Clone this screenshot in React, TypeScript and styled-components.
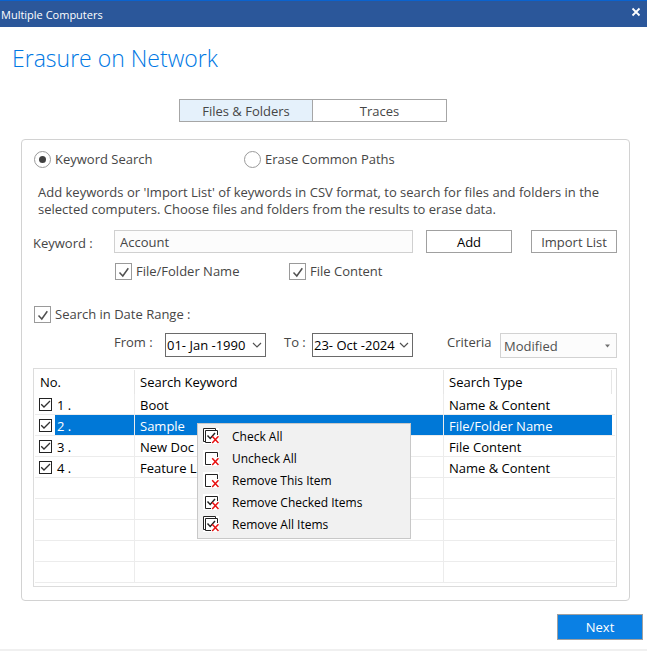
import React, { useState } from "react";
import styled, { createGlobalStyle, css } from "styled-components";

const GlobalStyle = createGlobalStyle`
  *, *::before, *::after { box-sizing: border-box; }
  body { margin: 0; background: #ffffff; }
  body, button, input, select { font-family: "Open Sans", "Noto Sans", sans-serif; font-size: 13px; }
`;

const Window = styled.div`
  display: flex;
  flex-direction: column;
  min-height: 100vh;
  color: #464646;
  line-height: 17px;
  border-bottom: 2px solid #f0f0f0;
`;

const TitleBar = styled.header`
  display: flex;
  align-items: flex-start;
  justify-content: space-between;
  height: 27px;
  padding: 0 5px 0 1px;
  background: #2b579a;
  border-top: 1px solid #0a63cf;
  color: #ffffff;
`;

const WindowTitle = styled.span`
  padding-top: 5px;
  font-size: 11px;
`;

const CloseButton = styled.button`
  display: grid;
  place-items: center;
  width: 12px;
  height: 22px;
  padding: 0;
  border: 0;
  background: none;
  color: #ffffff;
`;

const Heading = styled.h1`
  margin: 14px 0 0 12px;
  font-size: 23px;
  font-weight: 300;
  line-height: 34px;
  color: #0078e4;
`;

const Tabs = styled.div`
  display: flex;
  align-self: center;
  margin: 24px 21px 0 0;
`;

const Tab = styled.button<{ $active?: boolean }>`
  width: 134px;
  height: 23px;
  padding: 1px 0 0;
  border: 1px solid #a6a6a6;
  background: ${(p) => (p.$active ? "#e5f1fb" : "#ffffff")};
  color: #464646;
  line-height: 20px;

  & + & {
    width: 135px;
    margin-left: -1px;
  }
`;

const Panel = styled.main`
  display: flex;
  flex-direction: column;
  margin: 17px 17px 0 21px;
  padding: 10px 12px 13px 11px;
  border: 1px solid #d2d2d2;
  border-radius: 4px;
`;

const RadioRow = styled.div`
  display: grid;
  grid-template-columns: 210px auto;
  justify-content: start;
  padding-left: 1px;
`;

const Choice = styled.label`
  display: inline-flex;
  align-items: center;
  gap: 4px;
  height: 18px;
`;

const RadioInput = styled.input`
  appearance: none;
  display: grid;
  place-items: center;
  width: 17px;
  height: 17px;
  margin: 0;
  border: 1px solid #9a9a9a;
  border-radius: 50%;
  background: #ffffff;

  &:checked::before {
    content: "";
    width: 7px;
    height: 7px;
    border-radius: 50%;
    background: #404040;
  }
`;

const TickWrap = styled.span`
  display: grid;
  place-items: center;

  & > * {
    grid-area: 1 / 1;
  }

  svg {
    pointer-events: none;
    visibility: hidden;
  }

  input:checked + svg {
    visibility: visible;
  }
`;

const TickInput = styled.input<{ $small?: boolean }>`
  appearance: none;
  width: ${(p) => (p.$small ? 13 : 17)}px;
  height: ${(p) => (p.$small ? 13 : 17)}px;
  margin: 0;
  border: 1px solid ${(p) => (p.$small ? "#222222" : "#9a9a9a")};
  background: #ffffff;
`;

const Description = styled.p`
  margin: 16px 0 0 5px;
  line-height: 17px;
`;

const KeywordRow = styled.div`
  display: flex;
  align-items: center;
  margin-top: 12px;
`;

const KeywordLabel = styled.label`
  width: 81px;
  padding-top: 4px;
`;

const KeywordInput = styled.input`
  flex: 1;
  min-width: 0;
  height: 23px;
  padding: 0 5px;
  border: 1px solid #d0d0d0;
  border-radius: 0;
  background: #fcfcfc;
  color: #464646;
`;

const OutlineButton = styled.button<{ $dark?: boolean; $gap: number }>`
  width: 86px;
  height: 23px;
  margin-left: ${(p) => p.$gap}px;
  padding: 0;
  border: 1px solid #a0a0a0;
  background: #ffffff;
  color: ${(p) => (p.$dark ? "#000000" : "#464646")};
`;

const ScopeRow = styled.div`
  display: grid;
  grid-template-columns: 174px auto;
  justify-content: start;
  margin-top: 9px;
  padding-left: 82px;
`;

const RangeRow = styled.div`
  display: flex;
  margin-top: 25px;
  padding-left: 1px;
`;

const DateRow = styled.div`
  display: flex;
  align-items: flex-start;
  margin-top: 10px;
  padding-left: 81px;
`;

const FieldLabel = styled.label<{ $width: number }>`
  width: ${(p) => p.$width}px;
  padding-top: 1px;
`;

const SelectWrap = styled.span<{ $width: number }>`
  display: grid;
  align-items: center;
  width: ${(p) => p.$width}px;

  & > * {
    grid-area: 1 / 1;
  }

  svg {
    justify-self: end;
    margin-right: 4px;
    pointer-events: none;
  }
`;

const Select = styled.select<{ $muted?: boolean }>`
  appearance: none;
  width: 100%;
  height: ${(p) => (p.$muted ? 25 : 24)}px;
  padding: 0 1px;
  border: 1px solid #6a6a6a;
  border-radius: 0;
  background: #ffffff;
  color: #000000;

  ${(p) =>
    p.$muted &&
    css`
      padding: 0 3px;
      border-color: #d2d2d2;
      background: #fcfcfc;
      color: #505050;
    `}
`;

const CriteriaGroup = styled.div`
  display: flex;
  margin-left: auto;
`;

const List = styled.div`
  position: relative;
  height: 219px;
  margin-top: 10px;
  padding: 1px;
  border: 1px solid #dcdcdc;
`;

const Table = styled.table`
  width: 100%;
  table-layout: fixed;
  border-collapse: separate;
  border-spacing: 0;
  color: #000000;
`;

const Col = styled.col<{ $width?: string }>`
  width: ${(p) => p.$width ?? "auto"};
`;

const HeadCell = styled.th`
  height: 24px;
  padding: 0 5px;
  border-right: 1px solid #e6e6e6;
  font-weight: 400;
  text-align: left;

  &:last-child {
    padding: 0;
    border-right: 0;
  }
`;

const Cell = styled.td<{ $selected?: boolean }>`
  height: 21px;
  padding: 2px 5px 0;
  border-right: 1px solid #ececec;
  border-bottom: 1px solid #ececec;
  overflow: hidden;
  white-space: nowrap;
  background: ${(p) => (p.$selected ? "#0078d7" : "transparent")};
  background-clip: padding-box;
  color: ${(p) => (p.$selected ? "#ffffff" : "#000000")};

  &:nth-child(3) {
    border-right: 0;
  }

  &:last-child {
    padding: 0;
    border-right: 0;
  }
`;

const NumberCell = styled(Cell)`
  padding: 0;
  background: transparent;
`;

const NumberLabel = styled.label`
  display: flex;
  align-items: center;
  padding-left: 4px;
  gap: 3px;
`;

const NumberText = styled.span<{ $selected?: boolean }>`
  flex: 1;
  height: 20px;
  padding: 2px 0 0 2px;
  line-height: 18px;
  background: ${(p) => (p.$selected ? "#0078d7" : "transparent")};
  color: ${(p) => (p.$selected ? "#ffffff" : "#000000")};
`;

const Menu = styled.ul`
  position: absolute;
  top: 54px;
  left: 163px;
  width: 214px;
  margin: 0;
  padding: 1px 1px 3px;
  list-style: none;
  border: 1px solid #c8c8c8;
  background: #f1f1f1;
`;

const MenuButton = styled.button`
  display: flex;
  align-items: center;
  gap: 13px;
  width: 100%;
  height: 22px;
  padding: 0 4px;
  border: 0;
  background: none;
  color: #000000;
  font-size: 12px;
`;

const Footer = styled.footer`
  display: flex;
  justify-content: flex-end;
  padding: 13px 4px 8px;
`;

const NextButton = styled.button`
  width: 86px;
  height: 26px;
  padding: 0;
  border: 1px solid #a0a0a0;
  background: #0a80e4;
  color: #ffffff;
`;

const ChevronIcon = () => (
  <svg width="10" height="6" viewBox="0 0 10 6" fill="none" stroke="#505050" strokeWidth="1.2">
    <path d="M1 1 L5 5 L9 1" />
  </svg>
);

const ArrowIcon = () => (
  <svg width="9" height="4" viewBox="0 0 9 4" fill="#707070">
    <path d="M1 0.5 H6 L3.5 3.5 Z" />
  </svg>
);

function Tick({ small }: { small?: boolean }) {
  const [on, setOn] = useState(true);
  return (
    <TickWrap>
      <TickInput type="checkbox" $small={small} checked={on} onChange={() => setOn(!on)} />
      {small ? (
        <svg width="13" height="13" viewBox="0 0 13 13" fill="none" stroke="#303030" strokeWidth="1.3">
          <path d="M2.2 6.2 L5 9 L11 3" />
        </svg>
      ) : (
        <svg width="17" height="17" viewBox="0 0 17 17" fill="none" stroke="#505050" strokeWidth="1.5">
          <path d="M4.5 9.5 L7.8 13 L13.3 5.2" />
        </svg>
      )}
    </TickWrap>
  );
}

function MenuIcon({ stacked, ticked }: { stacked?: boolean; ticked?: boolean }) {
  return (
    <svg width="16" height="16" viewBox="0 0 16 16" fill="none">
      <rect width="16" height="16" fill="#ffffff" />
      {stacked && <path d="M2.5 13.5 H0.5 V0.5 H12.5 V2.5" stroke="#222222" />}
      <path d="M14.5 7 V2.5 H2.5 V14.5 H8" stroke="#222222" />
      {ticked && <path d="M4.5 7.5 L7.2 10.5 L12 5" stroke="#222222" strokeWidth="1.4" />}
      <path d="M9.2 8.2 L15.5 15 M15.5 8.2 L9.2 15" stroke="#e81010" strokeWidth="1.5" />
    </svg>
  );
}

const items = [
  { keyword: "Boot", type: "Name & Content" },
  { keyword: "Sample", type: "File/Folder Name" },
  { keyword: "New Doc", type: "File Content" },
  { keyword: "Feature List", type: "Name & Content" },
];

const menuItems = [
  { text: "Check All", stacked: true, ticked: true },
  { text: "Uncheck All" },
  { text: "Remove This Item" },
  { text: "Remove Checked Items", ticked: true },
  { text: "Remove All Items", stacked: true, ticked: true },
];

export default function App() {
  const [mode, setMode] = useState("keyword");
  return (
    <>
      <GlobalStyle />
      <Window>
        <TitleBar>
          <WindowTitle>Multiple Computers</WindowTitle>
          <CloseButton aria-label="Close">
            <svg width="10" height="10" viewBox="0 0 10 10" stroke="currentColor" strokeWidth="1.8">
              <path d="M1.5 1.5 L8.5 8.5 M8.5 1.5 L1.5 8.5" />
            </svg>
          </CloseButton>
        </TitleBar>
        <Heading>Erasure on Network</Heading>
        <Tabs role="tablist">
          <Tab role="tab" aria-selected="true" $active>Files &amp; Folders</Tab>
          <Tab role="tab" aria-selected="false">Traces</Tab>
        </Tabs>
        <Panel>
          <RadioRow>
            <Choice>
              <RadioInput type="radio" name="mode" checked={mode === "keyword"} onChange={() => setMode("keyword")} />
              Keyword Search
            </Choice>
            <Choice>
              <RadioInput type="radio" name="mode" checked={mode === "paths"} onChange={() => setMode("paths")} />
              Erase Common Paths
            </Choice>
          </RadioRow>
          <Description>
            Add keywords or 'Import List' of keywords in CSV format, to search for files and folders in the selected
            computers. Choose files and folders from the results to erase data.
          </Description>
          <KeywordRow>
            <KeywordLabel htmlFor="keyword">Keyword :</KeywordLabel>
            <KeywordInput id="keyword" defaultValue="Account" />
            <OutlineButton $dark $gap={13}>Add</OutlineButton>
            <OutlineButton $gap={19}>Import List</OutlineButton>
          </KeywordRow>
          <ScopeRow>
            <Choice><Tick />File/Folder Name</Choice>
            <Choice><Tick />File Content</Choice>
          </ScopeRow>
          <RangeRow>
            <Choice><Tick />Search in Date Range :</Choice>
          </RangeRow>
          <DateRow>
            <FieldLabel htmlFor="from" $width={51}>From :</FieldLabel>
            <SelectWrap $width={101}>
              <Select id="from"><option>01- Jan -1990</option></Select>
              <ChevronIcon />
            </SelectWrap>
            <FieldLabel as="span" $width={18} />
            <FieldLabel htmlFor="to" $width={28}>To :</FieldLabel>
            <SelectWrap $width={101}>
              <Select id="to"><option>23- Oct -2024</option></Select>
              <ChevronIcon />
            </SelectWrap>
            <CriteriaGroup>
              <FieldLabel htmlFor="criteria" $width={53}>Criteria</FieldLabel>
              <SelectWrap $width={117}>
                <Select id="criteria" $muted><option>Modified</option></Select>
                <ArrowIcon />
              </SelectWrap>
            </CriteriaGroup>
          </DateRow>
          <List>
            <Table>
              <colgroup>
                <Col $width="100px" />
                <Col />
                <Col $width="168px" />
                <Col $width="3px" />
              </colgroup>
              <thead>
                <tr>
                  <HeadCell>No.</HeadCell>
                  <HeadCell>Search Keyword</HeadCell>
                  <HeadCell>Search Type</HeadCell>
                  <HeadCell as="td" />
                </tr>
              </thead>
              <tbody>
                {items.map((item, i) => (
                  <tr key={item.keyword}>
                    <NumberCell>
                      <NumberLabel>
                        <Tick small />
                        <NumberText $selected={i === 1}>
                          {i + 1} .
                        </NumberText>
                      </NumberLabel>
                    </NumberCell>
                    <Cell $selected={i === 1}>{item.keyword}</Cell>
                    <Cell $selected={i === 1}>{item.type}</Cell>
                    <Cell />
                  </tr>
                ))}
                {[5, 6, 7, 8, 9].map((n) => (
                  <tr key={n}>
                    <Cell />
                    <Cell />
                    <Cell />
                    <Cell />
                  </tr>
                ))}
              </tbody>
            </Table>
            <Menu role="menu">
              {menuItems.map((m) => (
                <li key={m.text} role="none">
                  <MenuButton role="menuitem">
                    <MenuIcon stacked={m.stacked} ticked={m.ticked} />
                    {m.text}
                  </MenuButton>
                </li>
              ))}
            </Menu>
          </List>
        </Panel>
        <Footer>
          <NextButton>Next</NextButton>
        </Footer>
      </Window>
    </>
  );
}
